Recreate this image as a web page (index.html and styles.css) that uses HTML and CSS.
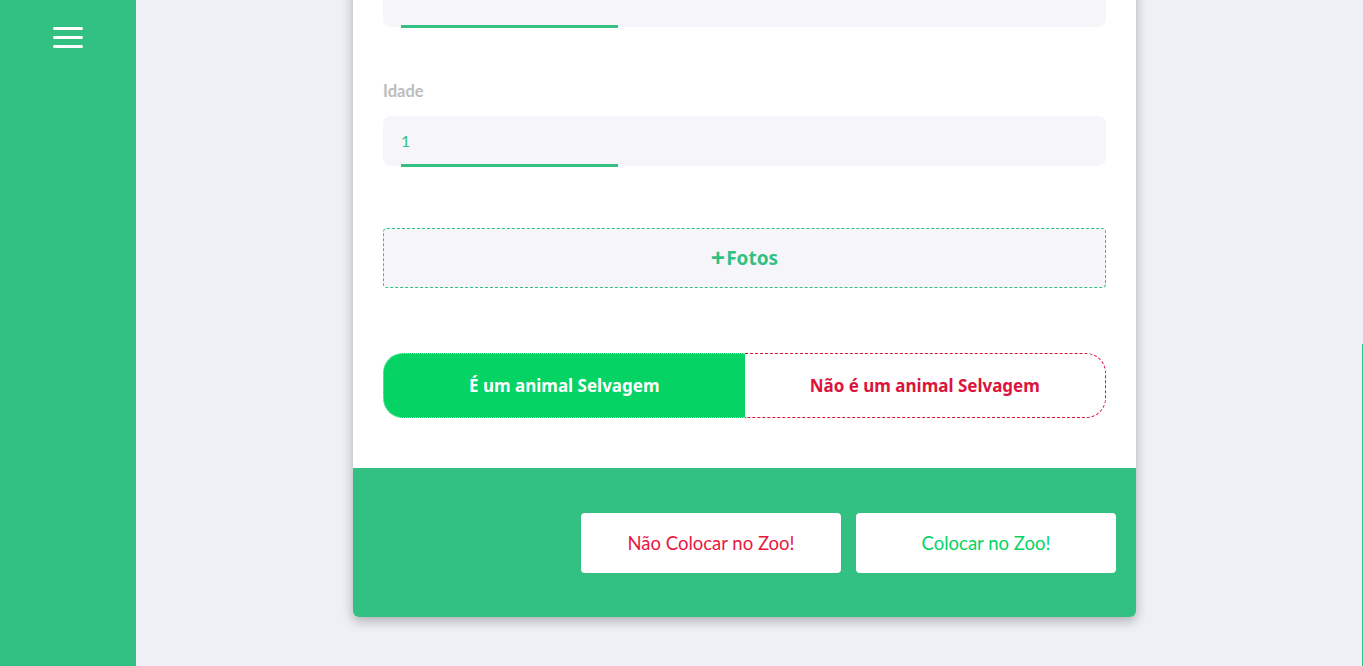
FILE: index.html
```html
<!DOCTYPE html>
<html lang="pt-BR">
<head>
<meta charset="utf-8">
<title>Zoo</title>
<link rel="stylesheet" href="styles.css">
</head>
<body>
<div class="app">
  <aside class="sidebar">
    <button class="menu-btn" aria-label="Menu">
      <svg width="30" height="22" viewBox="0 0 30 22">
        <path d="M1.5 1.5h27M1.5 10.5h27M1.5 19.5h27" stroke="#fff" stroke-width="3" stroke-linecap="round" fill="none"/>
      </svg>
    </button>
  </aside>
  <main class="main">
    <section class="card">
      <div class="card-body">
        <div class="field">
          <div class="input"><span class="underline"></span></div>
        </div>
        <div class="field field-age">
          <label class="label">Idade</label>
          <div class="input"><span class="value">1</span><span class="underline"></span></div>
        </div>
        <button class="photos"><span class="plus">+</span>Fotos</button>
        <div class="toggle">
          <button class="opt opt-yes">É um animal Selvagem</button>
          <button class="opt opt-no">Não é um animal Selvagem</button>
        </div>
      </div>
      <footer class="card-footer">
        <button class="action action-no">Não Colocar no Zoo!</button>
        <button class="action action-yes">Colocar no Zoo!</button>
      </footer>
    </section>
  </main>
  <div class="edge"></div>
</div>
</body>
</html>
```
FILE: styles.css
```css
* { box-sizing: border-box; }
html, body { margin: 0; padding: 0; }
body {
  background: #eff0f5;
  font-family: "Noto Sans", "Open Sans", sans-serif;
  height: 666px;
  overflow: hidden;
}
.app {
  display: flex;
  height: 666px;
  position: relative;
}
.sidebar {
  width: 136px;
  flex: none;
  background: #33c183;
  display: flex;
  justify-content: center;
  align-items: flex-start;
  padding-top: 27px;
}
.menu-btn {
  border: 0;
  background: none;
  padding: 0;
  display: block;
  cursor: pointer;
}
.menu-btn svg { display: block; }
.main {
  flex: 1;
  display: flex;
  justify-content: center;
  align-items: flex-start;
  padding-right: 10px;
}
.card {
  width: 783px;
  margin-top: -53px;
  background: #fff;
  border-radius: 0 0 6px 6px;
  box-shadow: 0 4px 12px rgba(0, 0, 0, 0.28);
  overflow: hidden;
}
.card-body {
  padding: 30px 30px 50px;
}
.field { margin-bottom: 53px; }
.field-age { margin-bottom: 62px; }
.label {
  display: block;
  height: 22px;
  margin-bottom: 14px;
  font-family: "Lato", sans-serif;
  font-size: 16.5px;
  line-height: 22px;
  font-weight: 700;
  color: #bcbcbc;
}
.input {
  position: relative;
  height: 50px;
  background: #f6f6fa;
  border-radius: 8px;
  padding: 0 18px;
  display: flex;
  align-items: center;
}
.value {
  font-family: "Lato", sans-serif;
  font-size: 16px;
  color: #33c183;
  margin-top: -2px;
}
.underline {
  position: absolute;
  left: 18px;
  bottom: -1px;
  width: 217px;
  height: 3px;
  background: #33c183;
}
.photos {
  display: flex;
  width: 100%;
  height: 60px;
  align-items: center;
  justify-content: center;
  background: #f6f6fa;
  border: 1px dashed #33c183;
  border-radius: 4px;
  font-family: "Noto Sans", sans-serif;
  font-size: 19px;
  font-weight: 700;
  color: #33c183;
  margin-bottom: 65px;
  padding: 0;
  cursor: pointer;
}
.plus {
  font-size: 25px;
  line-height: 1;
  margin-top: -2px;
  margin-right: 1px;
}
.toggle {
  display: flex;
  height: 65px;
}
.opt {
  flex: 1;
  font-family: "Noto Sans", sans-serif;
  font-size: 17px;
  font-weight: 700;
  cursor: pointer;
  padding: 0;
}
.opt-yes {
  background: #05d364;
  color: #fff;
  border: 1px dotted #9fe8bf;
  border-right: 0;
  border-radius: 20px 0 0 20px;
}
.opt-no {
  background: #fff;
  color: #dc143c;
  border: 1px dashed #dc143c;
  border-left: 0;
  border-radius: 0 20px 20px 0;
}
.card-footer {
  background: #33c183;
  height: 149px;
  padding: 45px 20px 44px;
  display: flex;
  justify-content: flex-end;
  gap: 15px;
}
.action {
  width: 260px;
  height: 60px;
  background: #fff;
  border: 0;
  border-radius: 4px;
  font-family: "Lato", sans-serif;
  font-size: 18.5px;
  cursor: pointer;
}
.action-no { color: #e8173f; }
.action-yes { color: #05d364; }
.edge {
  position: absolute;
  right: 0;
  top: 344px;
  bottom: 0;
  width: 1px;
  background: #33c183;
}
```
